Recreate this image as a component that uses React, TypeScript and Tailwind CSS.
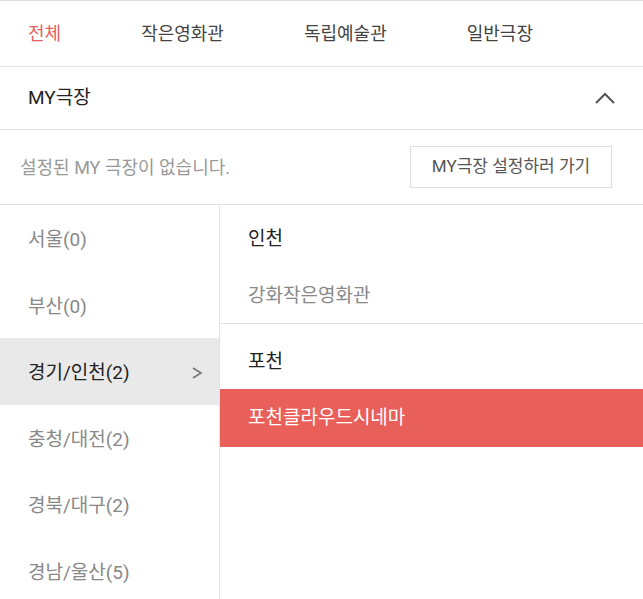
import React from "react";

const tabs = ["전체", "작은영화관", "독립예술관", "일반극장"];

const regions = [
  { name: "서울", count: 0 },
  { name: "부산", count: 0 },
  { name: "경기/인천", count: 2 },
  { name: "충청/대전", count: 2 },
  { name: "경북/대구", count: 2 },
  { name: "경남/울산", count: 5 },
];

export default function App() {
  const selected = 2;

  return (
    <div
      className="w-[643px] h-[599px] overflow-hidden bg-white border-t border-[#dcdcdc]"
      style={{ fontFamily: '"Roboto", "Noto Sans CJK KR", sans-serif' }}
    >
      {/* tabs */}
      <div className="flex items-center h-[66px] pl-[28px] gap-[80px] border-b border-[#e2e2e2] text-[18px]">
        {tabs.map((t, i) => (
          <span
            key={t}
            className={i === 0 ? "text-[#e5625b]" : "text-[#444]"}
          >
            {t}
          </span>
        ))}
      </div>

      {/* MY theater header */}
      <div className="flex items-center justify-between h-[63px] pl-[28px] pr-[27px] border-b border-[#e2e2e2]">
        <span className="text-[19px] text-[#222]">MY극장</span>
        <svg width="22" height="14" viewBox="0 0 22 14" fill="none">
          <polyline
            points="2,12 11,3 20,12"
            stroke="#555"
            strokeWidth="2"
          />
        </svg>
      </div>

      <div className="flex items-center justify-between h-[75px] pl-[20px] pr-[31px] border-b border-[#e2e2e2]">
        <span className="text-[18px] text-[#999]">설정된 MY 극장이 없습니다.</span>
        <button className="w-[202px] h-[42px] border border-[#dedede] text-[17px] text-[#555] bg-white">
          MY극장 설정하러 가기
        </button>
      </div>

      {/* region / theater lists */}
      <div className="flex">
        <ul className="w-[220px] shrink-0 border-r border-[#e2e2e2]">
          {regions.map((r, i) => (
            <li
              key={r.name}
              className={
                "flex items-center justify-between h-[66.5px] pt-[4px] pl-[28px] pr-[16px] text-[19px] " +
                (i === selected ? "bg-[#e9e9e9] text-[#222]" : "text-[#888]")
              }
            >
              <span>
                {r.name}({r.count})
              </span>
              {i === selected && (
                <svg width="12" height="14" viewBox="0 0 12 14" fill="none">
                  <polyline
                    points="2,2 10,7 2,12"
                    stroke="#777"
                    strokeWidth="1.6"
                  />
                </svg>
              )}
            </li>
          ))}
        </ul>

        <div className="flex-1">
          <div className="border-b border-[#e2e2e2]">
            <div className="flex items-center h-[68px] pl-[28px] text-[19px] text-[#222]">
              인천
            </div>
            <div className="flex items-center h-[50px] pb-[4px] pl-[28px] text-[19px] text-[#888]">
              강화작은영화관
            </div>
          </div>
          <div>
            <div className="flex items-center h-[65px] pt-[12px] pl-[28px] text-[19px] text-[#222]">
              포천
            </div>
            <div className="flex items-center h-[58px] pl-[28px] text-[19px] text-white bg-[#e9605a]">
              포천클라우드시네마
            </div>
          </div>
        </div>
      </div>
    </div>
  );
}
